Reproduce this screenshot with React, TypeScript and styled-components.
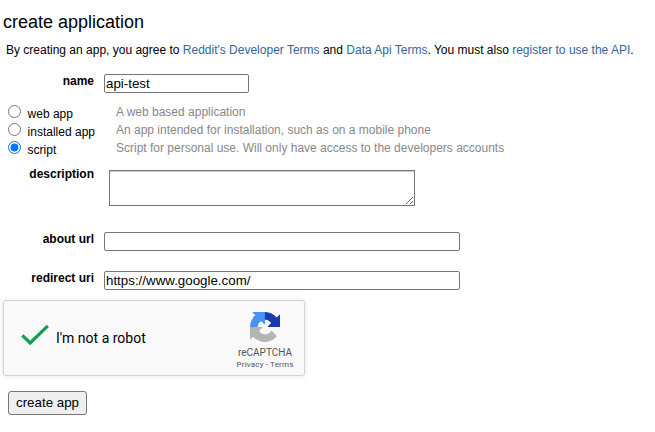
import React from "react";
import styled, { createGlobalStyle } from "styled-components";

const GlobalStyle = createGlobalStyle`
  *, *::before, *::after { box-sizing: border-box; }
  body {
    margin: 0;
    background: #fff;
    color: #000;
    font: 12px/18px "Liberation Sans", Arial, sans-serif;
  }
`;

const Page = styled.main`
  width: 655px;
  height: 432px;
  overflow: hidden;
  padding: 11px 3px 0;
`;

const Title = styled.h1`
  margin: 0;
  font-size: 18px;
  line-height: 22px;
  font-weight: normal;
`;

const Notice = styled.p`
  margin: 8px 0 0 3px;
  white-space: nowrap;
`;

const Link = styled.a`
  color: #369;
  text-decoration: none;
`;

const Field = styled.div<{ $top: number; $inset?: number }>`
  display: flex;
  align-items: flex-start;
  margin-top: ${(p) => p.$top}px;
  gap: ${(p) => 10 + (p.$inset ?? 0)}px;
`;

const Label = styled.label<{ $lineHeight?: number }>`
  width: 91px;
  height: 18px;
  line-height: ${(p) => p.$lineHeight ?? 16}px;
  text-align: right;
  font-weight: bold;
`;

const TextInput = styled.input<{ $width: number }>`
  display: block;
  width: ${(p) => p.$width}px;
  height: 19px;
  margin: 1px 0 0;
  padding: 1px;
  border: 1px solid #767676;
  border-radius: 2px;
  background: #fff;
  color: #000;
  font: 13.333px "Liberation Sans", Arial, sans-serif;
  outline: none;
`;

const TextArea = styled.textarea`
  display: block;
  width: 306px;
  height: 36px;
  margin: 5px 0 0;
  padding: 2px;
  border: 1px solid #767676;
  border-radius: 0;
  box-shadow: inset 0 1px 0 #ccc;
  background: #fff;
  resize: both;
`;

const Options = styled.div`
  display: grid;
  margin-top: 9px;
`;

const Option = styled.label`
  display: grid;
  grid-template-columns: 24.6px 88.4px auto;
  height: 18px;
`;

const Radio = styled.input`
  width: 13px;
  height: 13px;
  margin: 3px 0 0 5px;
`;

const OptionName = styled.span`
  padding-top: 3px;
  line-height: 18px;
`;

const Hint = styled.span`
  color: #888;
  padding-top: 1px;
`;

const Captcha = styled.section`
  display: flex;
  width: 302px;
  height: 76px;
  margin-top: 10px;
  border: 1px solid #d3d3d3;
  border-radius: 3px;
  background: #f9f9f9;
  box-shadow: 0 0 4px 1px rgba(0, 0, 0, 0.08);
  font-family: Roboto, sans-serif;
`;

const Check = styled.svg`
  width: 30px;
  height: 24px;
  margin: 22px 0 0 16px;
`;

const RobotText = styled.span`
  width: 174px;
  margin: 28px 0 0 6px;
  font-size: 14px;
  line-height: 18px;
`;

const Brand = styled.div`
  display: flex;
  flex-direction: column;
  align-items: center;
  width: 70px;
  padding-top: 11px;
  color: #555;
`;

const Logo = styled.svg`
  width: 30px;
  height: 30px;
`;

const BrandName = styled.span`
  margin-top: 5px;
  font-size: 10px;
  line-height: 12px;
`;

const Legal = styled.span`
  margin-top: 1px;
  font-size: 8px;
  line-height: 10px;
  letter-spacing: 0.17px;
  white-space: pre;
`;

const Submit = styled.button`
  display: block;
  width: 79px;
  height: 24px;
  margin: 15px 0 0 5px;
  padding: 0 0 2px;
  border: 1px solid #767676;
  border-radius: 3px;
  background: #efefef;
  color: #000;
  font: 13.333px "Liberation Sans", Arial, sans-serif;
`;

const appTypes = [
  { name: "web app", hint: "A web based application" },
  { name: "installed app", hint: "An app intended for installation, such as on a mobile phone" },
  { name: "script", hint: "Script for personal use. Will only have access to the developers accounts" },
];

export default function App() {
  return (
    <>
      <GlobalStyle />
      <Page>
        <Title>create application</Title>
        <Notice>
          By creating an app, you agree to <Link>Reddit's Developer Terms</Link> and{" "}
          <Link>Data Api Terms</Link>. You must also <Link>register to use the API</Link>.
        </Notice>
        <Field $top={14}>
          <Label htmlFor="name">name</Label>
          <TextInput id="name" $width={145} defaultValue="api-test" />
        </Field>
        <Options>
          {appTypes.map((type) => (
            <Option key={type.name}>
              <Radio type="radio" name="app_type" defaultChecked={type.name === "script"} />
              <OptionName>{type.name}</OptionName>
              <Hint>{type.hint}</Hint>
            </Option>
          ))}
        </Options>
        <Field $top={9} $inset={5}>
          <Label htmlFor="description" $lineHeight={18}>description</Label>
          <TextArea id="description" />
        </Field>
        <Field $top={25}>
          <Label htmlFor="about">about url</Label>
          <TextInput id="about" $width={356} />
        </Field>
        <Field $top={19}>
          <Label htmlFor="redirect">redirect uri</Label>
          <TextInput id="redirect" $width={356} defaultValue="https://www.google.com/" />
        </Field>
        <Captcha>
          <Check viewBox="0 0 30 24" fill="none" stroke="#0f9d58" strokeWidth="3.2">
            <path d="M2.3 12.3 L10.2 20 L27.8 2.8" />
          </Check>
          <RobotText>I'm not a robot</RobotText>
          <Brand>
            <Logo viewBox="0 0 64 64">
              <path fill="#1c3aa9" d="M64 31.955l-.033-1.37V4.687l-7.16 7.16C50.948 4.674 42.033.093 32.05.093c-10.4 0-19.622 4.96-25.458 12.64l11.736 11.86a15.55 15.55 0 0 1 4.754-5.334c2.05-1.6 4.952-2.906 8.968-2.906.485 0 .86.057 1.135.163 4.976.393 9.288 3.14 11.828 7.124l-8.307 8.307L64 31.953" />
              <path fill="#4a90f5" d="M31.862.094l-1.37.033H4.594l7.16 7.16C4.58 13.147 0 22.06 0 32.046c0 10.4 4.96 19.622 12.64 25.458L24.5 45.768a15.55 15.55 0 0 1-5.334-4.754c-1.6-2.05-2.906-4.952-2.906-8.968 0-.485.057-.86.163-1.135.393-4.976 3.14-9.288 7.124-11.828l8.307 8.307L31.86.095" />
              <path fill="#b5b5b5" d="M.001 32.045l.033 1.37v25.898l7.16-7.16c5.86 7.173 14.774 11.754 24.76 11.754 10.4 0 19.622-4.96 25.458-12.64l-11.736-11.86a15.55 15.55 0 0 1-4.754 5.334c-2.05 1.6-4.952 2.906-8.968 2.906-.485 0-.86-.057-1.135-.163-4.976-.393-9.288-3.14-11.828-7.124l8.307-8.307c-10.522.04-22.4.066-27.295-.005" />
            </Logo>
            <BrandName>reCAPTCHA</BrandName>
            <Legal>Privacy - Terms</Legal>
          </Brand>
        </Captcha>
        <Submit type="button">create app</Submit>
      </Page>
    </>
  );
}
